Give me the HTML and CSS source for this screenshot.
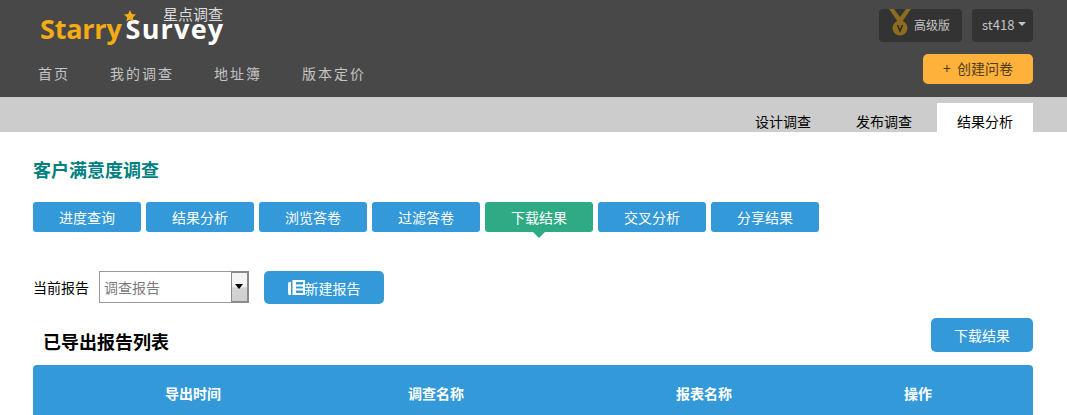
FILE: index.html
```html
<!DOCTYPE html>
<html lang="zh-CN">
<head>
<meta charset="utf-8">
<title>客户满意度调查</title>
<link rel="stylesheet" href="styles.css">
</head>
<body>
<header class="topbar">
  <div class="topbar-left">
    <a class="logo">
      <span class="logo-cn">星点调查</span>
      <span class="logo-a">Starry</span><span class="logo-b">Survey</span>
      <svg class="logo-star" width="14" height="36" viewBox="0 0 14 36">
        <polygon points="7,0 8.800,4 13,4.500 9.800,7.400 10.800,11.500 7,9.400 3.200,11.500 4.200,7.400 1,4.500 5.200,4" fill="#f5ab14"/>
        <path d="M6.500 11.500c-.6 2.500.2 4 1.500 5.500" fill="none" stroke="#fff" stroke-width="1.500"/>
      </svg>
    </a>
    <nav class="mainnav">
      <a>首页</a><a>我的调查</a><a>地址簿</a><a>版本定价</a>
    </nav>
  </div>
  <div class="topbar-right">
    <div class="account">
      <a class="chip chip-plan">
        <svg class="medal" width="22" height="33" viewBox="0 0 22 33">
          <path d="M0 0h5l6 8 6-8h5l-9 13h-4z" fill="#8c6d1f"/>
          <circle cx="11" cy="19" r="7.500" fill="#8c6d1f"/>
          <path d="M8.500 16l2.500 6 2.500-6" fill="none" stroke="#2f2a1c" stroke-width="1.500"/>
        </svg>
        <span class="chip-text">高级版</span>
      </a>
      <a class="chip chip-user"><span class="chip-text">st418</span><i class="caret"></i></a>
    </div>
    <a class="create">+ 创建问卷</a>
  </div>
</header>

<div class="tabband">
  <a class="tab">设计调查</a>
  <a class="tab">发布调查</a>
  <a class="tab tab-active">结果分析</a>
</div>

<main class="content">
  <h1 class="survey-title">客户满意度调查</h1>
  <div class="subnav">
    <a class="subbtn">进度查询</a>
    <a class="subbtn">结果分析</a>
    <a class="subbtn">浏览答卷</a>
    <a class="subbtn">过滤答卷</a>
    <a class="subbtn subbtn-active">下载结果</a>
    <a class="subbtn">交叉分析</a>
    <a class="subbtn">分享结果</a>
  </div>

  <div class="report-row">
    <label class="report-label">当前报告</label>
    <div class="select-wrap">
      <select class="report-select"><option>调查报告</option></select>
      <span class="select-arrow"></span>
    </div>
    <a class="new-report">
      <svg class="report-icon" width="17" height="15" viewBox="0 0 17 15">
        <path fill="#fff" d="M3 2v13H1.500A1.500 1.500 0 0 1 0 13.500V3.500A1.500 1.500 0 0 1 1.500 2z"/>
        <path fill="#fff" fill-rule="evenodd" d="M4.500 0H17v15H4.500zM8 2v2.500h7V2zM8 6.500v2h7v-2zM8 10.500V13h7v-2.500z"/>
      </svg>
      新建报告
    </a>
  </div>

  <div class="list-head">
    <h2 class="list-title">已导出报告列表</h2>
    <a class="download">下载结果</a>
  </div>

  <table class="report-table">
    <thead>
      <tr>
        <th class="col-time">导出时间</th>
        <th class="col-survey">调查名称</th>
        <th class="col-report">报表名称</th>
        <th class="col-action">操作</th>
      </tr>
    </thead>
  </table>
</main>
</body>
</html>
```
FILE: styles.css
```css
* { box-sizing: border-box; }
html, body { margin: 0; padding: 0; background: #fff; }
body {
  font-family: "Noto Sans CJK SC", "Liberation Sans", sans-serif;
  font-size: 14px;
  color: #000;
  overflow: hidden;
  height: 415px;
}
a { display: block; }

.topbar {
  height: 97px;
  background: #484848;
  padding: 0 34px 0 38px;
  display: flex;
  justify-content: space-between;
}
.topbar-left { display: flex; flex-direction: column; }

.logo {
  position: relative;
  width: 190px;
  height: 58px;
  padding: 9px 0 0 2px;
  font-family: "Open Sans", sans-serif;
  font-weight: 700;
  font-size: 27px;
  line-height: 40px;
  white-space: nowrap;
  letter-spacing: -0.2px;
}
.logo-a { color: #f5ab14; }
.logo-b { color: #fff; margin-left: 4px; letter-spacing: 1.2px; }
.logo-cn {
  position: absolute;
  left: 125px;
  top: 4px;
  font-family: "Noto Sans CJK SC", sans-serif;
  font-weight: 400;
  font-size: 15px;
  line-height: 20px;
  letter-spacing: 0;
  color: #ddd;
}
.logo-star { position: absolute; left: 85px; top: 10px; }

.mainnav { display: flex; gap: 40px; }
.mainnav a {
  font-size: 14px;
  line-height: 30px;
  letter-spacing: 2px;
  color: #c4c4c4;
}

.topbar-right {
  padding-top: 9px;
  display: flex;
  flex-direction: column;
  align-items: flex-end;
  gap: 12px;
}
.account { display: flex; gap: 10px; }
.chip {
  height: 33px;
  background: #333;
  border-radius: 4px;
  color: #c4c4c4;
  font-size: 13px;
  line-height: 33px;
  display: flex;
  align-items: center;
}
.chip-text { position: relative; top: -1px; }
.chip-plan { width: 83px; padding-left: 10px; font-size: 12px; }
.medal { margin-right: 3px; }
.chip-user { width: 61px; padding-left: 10px; }
.caret {
  margin: -3px 0 0 4px;
  border-left: 4px solid transparent;
  border-right: 4px solid transparent;
  border-top: 4px solid #c4c4c4;
}
.create {
  width: 110px;
  height: 30px;
  background: #ffb23b;
  border-radius: 5px;
  color: #4d3a1d;
  font-size: 14px;
  line-height: 29px;
  text-align: center;
  word-spacing: 3px;
}

.tabband {
  height: 35px;
  background: #ccc;
  padding: 6px 34px 0 0;
  display: flex;
  justify-content: flex-end;
  gap: 5px;
}
.tab {
  width: 96px;
  height: 29px;
  line-height: 36px;
  text-align: center;
  font-size: 14px;
  color: #000;
  overflow: hidden;
}
.tab-active { background: #fff; }

.content { padding: 0 34px 0 33px; }
.survey-title {
  margin: 0;
  padding-top: 24px;
  font-size: 18px;
  line-height: 27px;
  font-weight: 700;
  color: #008080;
}
.subnav { display: flex; gap: 5px; margin-top: 19px; }
.subbtn {
  position: relative;
  width: 108px;
  height: 30px;
  background: #3399d8;
  border-radius: 3px;
  color: #fff;
  font-size: 14px;
  line-height: 30px;
  text-align: center;
}
.subbtn-active { background: #2eab85; }
.subbtn-active::after {
  content: "";
  position: absolute;
  left: 48px;
  top: 30px;
  border-left: 6px solid transparent;
  border-right: 6px solid transparent;
  border-top: 6px solid #2eab85;
}

.report-row {
  display: flex;
  align-items: flex-start;
  margin-top: 39px;
  height: 33px;
}
.report-label { line-height: 33px; width: 66px; font-size: 14px; }
.select-wrap { position: relative; width: 150px; height: 32px; }
.report-select {
  display: block;
  width: 100%;
  height: 100%;
  appearance: none;
  background: #fff;
  border: 1px solid #999;
  border-radius: 0;
  padding: 0 0 0 4px;
  font-family: inherit;
  font-size: 14px;
  color: #7a7a7a;
}
.select-arrow {
  position: absolute;
  right: 0;
  top: 0;
  width: 18px;
  height: 32px;
  border: 2px solid #8a8a8a;
  border-left-width: 1px;
  border-right-width: 2px;
  background: linear-gradient(#f4f4f4 0, #f4f4f4 45%, #d4d4d4 55%, #cfcfcf 100%);
}
.select-arrow::after {
  content: "";
  position: absolute;
  left: 3px;
  top: 11px;
  border-left: 4px solid transparent;
  border-right: 4px solid transparent;
  border-top: 5px solid #000;
}
.new-report {
  margin-left: 15px;
  width: 120px;
  height: 33px;
  background: #3399d8;
  border-radius: 5px;
  color: #fff;
  font-size: 14px;
  display: flex;
  align-items: center;
  justify-content: center;
  gap: 0;
}
.report-icon { flex: none; }

.list-head {
  display: flex;
  justify-content: space-between;
  align-items: flex-start;
  margin-top: 14px;
  height: 47px;
  padding-left: 10px;
}
.list-title {
  margin: 0;
  padding-top: 10px;
  font-size: 18px;
  line-height: 27px;
  font-weight: 700;
}
.download {
  width: 102px;
  height: 34px;
  background: #3399d8;
  border-radius: 5px;
  color: #fff;
  font-size: 14px;
  line-height: 34px;
  text-align: center;
}

.report-table {
  width: 1000px;
  table-layout: fixed;
  border-collapse: separate;
  border-spacing: 0;
  background: #3399d8;
  border-radius: 4px 4px 0 0;
}
.report-table th {
  height: 50px;
  padding: 6px 0 0;
  color: #fff;
  font-size: 14px;
  font-weight: 700;
  text-align: center;
}
.report-table .col-time { width: 260px; padding-left: 60px; }
.report-table .col-survey { width: 286px; }
.report-table .col-report { width: 250px; }
.report-table .col-action { width: 204px; padding-right: 26px; }
```
